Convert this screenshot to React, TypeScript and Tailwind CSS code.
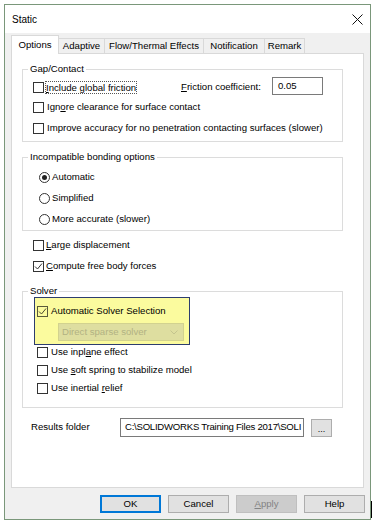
import React from 'react';

const font = { fontFamily: '"Liberation Sans", Arial, sans-serif' };

function CheckBox({ checked = false, tinted = false }: { checked?: boolean; tinted?: boolean }) {
  return (
    <span
      className={`inline-flex w-[11px] h-[11px] shrink-0 items-center justify-center border ${
        tinted ? 'border-[#5a5a3a] bg-transparent' : 'border-[#333333] bg-white'
      }`}
    >
      {checked && (
        <svg width="9" height="9" viewBox="0 0 9 9">
          <polyline points="1,4.5 3.5,7 8,1.5" fill="none" stroke={tinted ? '#4a4a30' : '#333'} strokeWidth="1" />
        </svg>
      )}
    </span>
  );
}

function Radio({ checked = false }: { checked?: boolean }) {
  return (
    <span className="inline-flex w-[11px] h-[11px] shrink-0 items-center justify-center rounded-full border border-[#333333] bg-white">
      {checked && <span className="w-[5px] h-[5px] rounded-full bg-[#222]" />}
    </span>
  );
}

// groupbox: legend sits on the top border, padding goes on the inner div
function Group({ title, className, children }: { title: string; className?: string; children: React.ReactNode }) {
  return (
    <fieldset className={`w-[321px] border border-[#dcdcdc] ${className ?? ''}`}>
      <legend className="ml-[5px] px-[2px] leading-[14px]">{title}</legend>
      {children}
    </fieldset>
  );
}

const tabs = [
  { label: 'Options', w: 'w-[48px]', active: true },
  { label: 'Adaptive', w: 'w-[47px]' },
  { label: 'Flow/Thermal Effects', w: 'w-[100px]' },
  { label: 'Notification', w: 'w-[62px]' },
  { label: 'Remark', w: 'w-[41px]' },
];

export default function App() {
  return (
    <div className="relative w-[374px] h-[528px] bg-white pt-[4px] pl-[4px] text-[9.6px] text-black" style={font}>
      <div className="w-[367px] h-[516px] border border-[#7a977a] bg-[#f0f0f0] flex flex-col">
        {/* title bar */}
        <div className="h-[28px] bg-white flex items-center justify-between pl-[7px] pr-[7px]">
          <span className="text-[10px]">Static</span>
          <svg width="11" height="11" viewBox="0 0 11 11">
            <line x1="0.5" y1="0.5" x2="10.5" y2="10.5" stroke="#111" strokeWidth="1" />
            <line x1="10.5" y1="0.5" x2="0.5" y2="10.5" stroke="#111" strokeWidth="1" />
          </svg>
        </div>

        <div className="pl-[6px] pt-[2px]">
          {/* tabs */}
          <div className="flex items-end h-[18px]">
            {tabs.map((t, i) =>
              t.active ? (
                <div
                  key={t.label}
                  className={`${t.w} h-[19px] -mb-px relative z-10 bg-white border-t border-l border-r border-[#d9d9d9] flex items-center justify-center`}
                >
                  {t.label}
                </div>
              ) : (
                <div
                  key={t.label}
                  className={`${t.w} h-[15px] ${i > 0 ? '-ml-px' : ''} bg-[#f0f0f0] border-t border-l border-r border-[#d9d9d9] flex items-center justify-center`}
                >
                  {t.label}
                </div>
              )
            )}
          </div>

          {/* tab panel */}
          <div className="w-[353px] h-[435px] bg-white border border-[#d9d9d9] pl-[10px] pt-[8px]">
            <Group title="Gap/Contact" className="pb-[3px]">
              <div className="pl-[10px] pt-[1px]">
                <div className="flex items-center h-[20px]">
                  <div className="w-[148px] flex items-center">
                    <CheckBox />
                    <span className="ml-[1px] border border-dotted border-[#555] leading-[11px]">
                      <span className="underline">I</span>nclude global friction
                    </span>
                  </div>
                  <span className="w-[91px]">
                    <span className="underline">F</span>riction coefficient:
                  </span>
                  <div className="w-[51px] h-[18px] self-start border border-[#7a7a7a] bg-white pl-[5px] flex items-center">
                    0.05
                  </div>
                </div>
                <div className="flex items-center h-[20px]">
                  <CheckBox />
                  <span className="ml-[3px]">
                    Ign<span className="underline">o</span>re clearance for surface contact
                  </span>
                </div>
                <div className="flex items-center h-[20px] mt-[1px]">
                  <CheckBox />
                  <span className="ml-[3px]">Improve accuracy for no penetration contacting surfaces (slower)</span>
                </div>
              </div>
            </Group>

            <Group title="Incompatible bonding options" className="mt-[8px]">
              <div className="pl-[16px] pt-[3px]">
                <div className="flex items-center h-[21px]">
                  <Radio checked />
                  <span className="ml-[2px]">Automatic</span>
                </div>
                <div className="flex items-center h-[21px]">
                  <Radio />
                  <span className="ml-[2px]">Simplified</span>
                </div>
                <div className="flex items-center h-[21px]">
                  <Radio />
                  <span className="ml-[2px]">More accurate (slower)</span>
                </div>
              </div>
            </Group>

            <div className="mt-[4px] pl-[11px]">
              <div className="flex items-center h-[21px]">
                <CheckBox />
                <span className="ml-[2px]">
                  <span className="underline">L</span>arge displacement
                </span>
              </div>
              <div className="flex items-center h-[21px]">
                <CheckBox checked />
                <span className="ml-[2px]">
                  <span className="underline">C</span>ompute free body forces
                </span>
              </div>
            </div>

            <Group title="Solver" className="mt-[7px] pb-[10px]">
              <div className="-mt-px ml-[11px] w-[156px] h-[48px] border border-[#2d3d6e] bg-[#fbfb9e] pl-[2px] pt-[3px]">
                <div className="flex items-center h-[20px]">
                  <CheckBox checked tinted />
                  <span className="ml-[3px]">Automatic Solver Selection</span>
                </div>
                <div className="ml-[21px] mt-[2px] w-[126px] h-[18px] border border-[#d2d28f] bg-[#dedea0] flex items-center justify-between pl-[3px] pr-[5px] text-[#b2b283]">
                  <span>Direct sparse solver</span>
                  <svg width="8" height="5" viewBox="0 0 8 5">
                    <polyline points="0.5,0.5 4,4 7.5,0.5" fill="none" stroke="#c4c48e" strokeWidth="1" />
                  </svg>
                </div>
              </div>
              <div className="-mt-[2px] pl-[14px]">
                <div className="flex items-center h-[18px]">
                  <CheckBox />
                  <span className="ml-[3px]">
                    Use inpl<span className="underline">a</span>ne effect
                  </span>
                </div>
                <div className="flex items-center h-[18px]">
                  <CheckBox />
                  <span className="ml-[3px]">
                    Use <span className="underline">s</span>oft spring to stabilize model
                  </span>
                </div>
                <div className="flex items-center h-[18px]">
                  <CheckBox />
                  <span className="ml-[3px]">
                    Use inertial <span className="underline">r</span>elief
                  </span>
                </div>
              </div>
            </Group>

            <div className="mt-[10px] flex items-center h-[19px] pl-[9px]">
              <span className="w-[89px]">Results folder</span>
              <div className="w-[184px] h-[19px] border border-[#7a7a7a] bg-white pl-[4px] flex items-center overflow-hidden whitespace-nowrap tracking-[-0.25px]">
                C:\SOLIDWORKS Training Files 2017\SOLI
              </div>
              <div className="ml-[7px] w-[21px] h-[18px] border border-[#adadad] bg-[#e1e1e1] flex items-end justify-center pb-[3px] leading-[8px] text-[9px]">
                ...
              </div>
            </div>
          </div>
        </div>

        {/* buttons */}
        <div className="mt-[7px] pl-[95px] flex gap-[7px]">
          <div className="w-[61px] h-[18px] border-2 border-[#0078d7] bg-[#e1e1e1] flex items-center justify-center">OK</div>
          <div className="w-[61px] h-[18px] border border-[#adadad] bg-[#e1e1e1] flex items-center justify-center">Cancel</div>
          <div className="w-[61px] h-[18px] border border-[#bfbfbf] bg-[#cccccc] text-[#838383] flex items-center justify-center">
            <span>
              <span className="underline">A</span>pply
            </span>
          </div>
          <div className="w-[61px] h-[18px] border border-[#adadad] bg-[#e1e1e1] flex items-center justify-center">Help</div>
        </div>
      </div>
      <div className="absolute left-[371px] top-[501px] w-px h-[17px] bg-black" />
    </div>
  );
}
